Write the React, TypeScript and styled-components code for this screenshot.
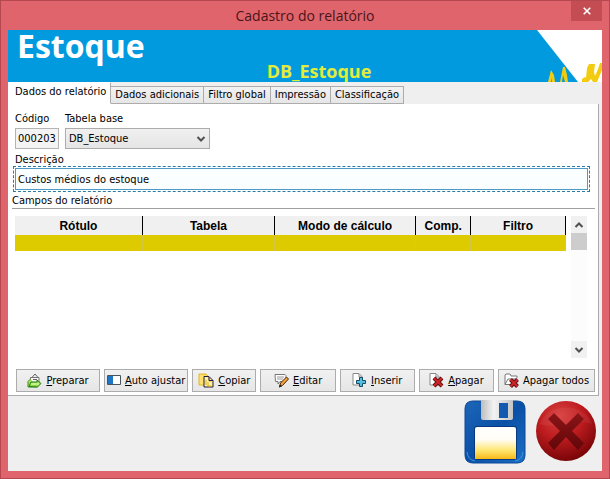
import React, { useState } from "react";
import styled, { createGlobalStyle, css } from "styled-components";

const uiFont = `"DejaVu Sans Condensed", "DejaVu Sans", sans-serif`;

const GlobalStyle = createGlobalStyle`
  * { box-sizing: border-box; }
  body { margin: 0; }
  button, input, select { font: inherit; color: inherit; }
`;

const Window = styled.div`
  min-height: 100vh;
  display: flex;
  flex-direction: column;
  padding: 0 7px 7px;
  border: 1px solid #b5474f;
  background: #e0646c;
  color: #000;
  font-family: ${uiFont};
  font-size: 11px;
  line-height: 14px;
`;

const TitleBar = styled.header`
  display: grid;
  grid-template-columns: 31px 1fr 31px;
  height: 29px;
`;

const Title = styled.h1`
  grid-column: 2;
  margin: 0;
  text-align: center;
  font: 400 14px/30px "Open Sans", sans-serif;
  color: #4a1519;
`;

const CloseButton = styled.button`
  display: grid;
  place-items: center;
  height: 20px;
  padding: 0;
  border: 0;
  background: #c44d53;
`;

const Client = styled.main`
  flex: 1;
  display: flex;
  flex-direction: column;
  background: #efefef;
`;

const Banner = styled.div`
  display: grid;
  grid-template-columns: 1fr 65px;
  height: 52px;
  background: #029adf;
`;

const BannerText = styled.div`
  display: grid;
  grid-template-rows: 31px 21px;
  padding-left: 9px;
`;

const Module = styled.div`
  color: #fff;
  font: 700 32px/32px "Open Sans", sans-serif;
`;

const TableName = styled.div`
  padding-left: 84px;
  text-align: center;
  color: #e2ec3a;
  font: 700 18px/20px "Open Sans", sans-serif;
`;

const TabList = styled.div`
  display: flex;
  align-items: flex-end;
  height: 22px;
`;

const Tab = styled.button<{ $active: boolean }>`
  height: 18px;
  padding: 0 4px;
  border: 1px solid #acacac;
  border-left-width: 0;
  background: linear-gradient(#f2f2f2, #e6e6e6);
  white-space: nowrap;
  ${(p) =>
    p.$active &&
    css`
      height: 22px;
      padding: 0 4px 3px 7px;
      border-color: #fff #acacac #fff #fff;
      background: #fff;
    `}
`;

const Panel = styled.section`
  flex: 1;
  display: flex;
  flex-direction: column;
  margin-right: 3px;
  padding: 8px 3px 3px 4px;
  border: solid #acacac;
  border-width: 0 1px 1px 0;
  background: #fff;
`;

const Fields = styled.div`
  display: flex;
  gap: 6px;
  padding: 0 3px;
`;

const Field = styled.div`
  display: flex;
  flex-direction: column;
  gap: 2px;
`;

const DescriptionField = styled(Field)`
  gap: 1px;
  padding: 4px 7px 0 3px;
`;

const CodeInput = styled.input`
  width: 44px;
  height: 21px;
  padding: 0 2px;
  border: 1px solid #b4b4b4;
  background: #f4f4f4;
`;

const SelectBox = styled.div`
  display: grid;
  align-items: center;
  width: 145px;

  > * { grid-area: 1 / 1; }
  > svg { justify-self: end; margin-right: 4px; pointer-events: none; }
`;

const Select = styled.select`
  appearance: none;
  width: 100%;
  height: 21px;
  padding: 0 20px 0 3px;
  border: 1px solid #acacac;
  border-radius: 0;
  background: linear-gradient(#f0f0f0, #e5e5e5);
`;

const DescriptionInput = styled.input`
  height: 22px;
  padding: 0 2px;
  border: 1px solid #4f9ac4;
  outline: 1px dashed #2a7ba6;
  outline-offset: 1px;
  background: #fafeff;
`;

const GroupTitle = styled.h2`
  margin: 4px 0 7px;
  border-bottom: 1px solid #a0a0a0;
  font: inherit;
`;

const GridArea = styled.div`
  flex: 1;
  display: flex;
  gap: 5px;
  padding: 0 8px 0 3px;
`;

const TableSpace = styled.div`
  flex: 1;
`;

const Table = styled.table`
  width: 100%;
  table-layout: fixed;
  border-collapse: separate;
  border-spacing: 0;
`;

const HeadCell = styled.th`
  height: 19px;
  padding: 0;
  border-right: 1px solid #000;
  background: #f0f0f0;
  font: 700 12px/18px "Liberation Sans", Arial, sans-serif;
`;

const Cell = styled.td`
  height: 16px;
  padding: 0;
  border-right: 1px solid #d2c548;
  background: #ddcb00;
`;

const ScrollBar = styled.div`
  display: flex;
  flex-direction: column;
  width: 16px;
  background: #fcfcfc;
`;

const ScrollButton = styled.button`
  display: grid;
  place-items: center;
  height: 17px;
  padding: 0;
  border: 0;
  background: #f1f1f1;
`;

const ScrollThumb = styled.div`
  height: 17px;
  margin-bottom: auto;
  background: #cdcdcd;
`;

const Toolbar = styled.div`
  display: grid;
  grid-template-columns: 85fr 85fr 65fr 76fr 76fr 76fr 98fr;
  gap: 4px;
  margin-top: 11px;
  padding-left: 4px;
`;

const ToolButton = styled.button`
  display: flex;
  align-items: center;
  justify-content: center;
  gap: 4px;
  height: 23px;
  padding: 0;
  border: 1px solid #acacac;
  background: linear-gradient(#f1f1f1, #e6e6e6);
  white-space: nowrap;

  svg { flex: none; }
`;

const Footer = styled.footer`
  display: flex;
  justify-content: flex-end;
  gap: 7px;
  height: 75px;
  padding: 4px 4px 0 0;
`;

const ImageButton = styled.button`
  width: 64px;
  height: 66px;
  padding: 0;
  border: 0;
  background: none;
`;

const Chevron = ({ up = false }: { up?: boolean }) => (
  <svg width="10" height="8" viewBox="0 0 10 8" fill="none" stroke="#505050" strokeWidth="2">
    <path d={up ? "M1.5 6 5 2.5 8.5 6" : "M1.5 2 5 5.5 8.5 2"} />
  </svg>
);

const BannerArt = () => (
  <svg width="65" height="52" viewBox="0 0 65 52">
    <path d="M0 0h65v52H41z" fill="#fff" />
    <g fill="#f3cc12">
      <path d="M11 52l3-12 3 5 1 7h-3v-4l-1 4zM23 52l3-15h2l2 8 1 7h-3l-2-7-1 7z" />
      <path d="M45 52v-3l3-2 1 1 1-10 2-4h6l-1 8 1 4 3-7 2-6h2v7l-5 12h-4l-2-3-3 3z" />
    </g>
  </svg>
);

const icons = {
  prepare: (
    <svg width="15" height="15" viewBox="0 0 15 15">
      <path d="M3.500 8V4.500H12V9" fill="#f6f6f6" stroke="#777" />
      <path d="M5 4.500l3-3.500 3 3.500M6 6.500h4" fill="none" stroke="#666" />
      <path d="M3.500 6L1 8.500V14h9.500" fill="#a5e35c" stroke="#3b8a25" />
      <path d="M2 13.500l2-4.500h6V7l4 3.500-3.500 3.500z" fill="#8bdb3c" stroke="#2e7d20" />
      <path d="M4 11h8" stroke="#d8f7a8" strokeWidth="1.500" />
    </svg>
  ),
  fit: (
    <svg width="14" height="11" viewBox="0 0 14 11">
      <path d="M.5.500h13v9H.5z" fill="#fff" stroke="#4b545c" />
      <path d="M1 1h5v8H1z" fill="#1f76c4" />
    </svg>
  ),
  copy: (
    <svg width="16" height="15" viewBox="0 0 16 15">
      <path d="M1 1h7l2 2v9H1z" fill="#ffe06a" stroke="#e3b32d" />
      <path d="M6 3.500h5l4 4V14H6z" fill="#fff2a0" stroke="#1c1c40" />
      <path d="M11 4v4h4M8 7v5M10 9v4h3" fill="none" stroke="#e6ae1a" />
      <path d="M11 4v3.500h4" fill="none" stroke="#1c1c60" />
    </svg>
  ),
  edit: (
    <svg width="15" height="15" viewBox="0 0 15 15">
      <path d="M1 1.500h10l1 1v5l-1 1H6L4 11V8.500H1.500z" fill="#fff" stroke="#777" />
      <path d="M3 4h7M3 6h6" stroke="#999" />
      <path d="M5.500 14l1-4 6-6 2 2-6 6.500z" fill="#f4a13a" stroke="#4a2614" />
      <path d="M5 14.500l1-3 2 1.500z" fill="#221" />
    </svg>
  ),
  insert: (
    <svg width="15" height="15" viewBox="0 0 15 15">
      <path d="M1 .5h6l3 3V12H1z" fill="#fff" stroke="#888" />
      <path d="M7 1v3h3" fill="none" stroke="#888" />
      <path d="M7.500 4.500h3v3h3v3h-3v3h-3v-3h-3v-3h3z" fill="#52bfe0" stroke="#174b63" />
    </svg>
  ),
  remove: (
    <svg width="15" height="15" viewBox="0 0 15 15">
      <path d="M1 .5h6l3 3V12H1z" fill="#fff" stroke="#888" />
      <path d="M7 1v3h3" fill="none" stroke="#888" />
      <path d="M5 5l8 8M13 5l-8 8" stroke="#5c1111" strokeWidth="4" />
      <path d="M5 5l8 8M13 5l-8 8" stroke="#cf2429" strokeWidth="2" />
    </svg>
  ),
  removeAll: (
    <svg width="15" height="15" viewBox="0 0 15 15">
      <path d="M1 11.500V2l1-1h4l1 2h6v2M1 11.500L4 6h9v3M1 11.500h7" fill="#fff" stroke="#777" />
      <path d="M6.500 6.500l7 7M13.500 6.500l-7 7" stroke="#5c1111" strokeWidth="4" />
      <path d="M6.500 6.500l7 7M13.500 6.500l-7 7" stroke="#cf2429" strokeWidth="2" />
    </svg>
  ),
};

const SaveIcon = () => (
  <svg width="62" height="64" viewBox="0 0 62 64">
    <defs>
      <linearGradient id="disk" x2="1" y2="1">
        <stop offset="0" stopColor="#1c66b8" />
        <stop offset=".5" stopColor="#0b50a6" />
        <stop offset="1" stopColor="#1b6fc6" />
      </linearGradient>
      <linearGradient id="label" x2="0" y2="1">
        <stop offset="0" stopColor="#fff" />
        <stop offset=".4" stopColor="#fffdf4" />
        <stop offset=".72" stopColor="#ffe774" />
        <stop offset="1" stopColor="#f7b818" />
      </linearGradient>
      <linearGradient id="shutter">
        <stop offset="0" stopColor="#bdbdbd" />
        <stop offset=".4" stopColor="#f3f3f3" />
        <stop offset="1" stopColor="#c4c4c4" />
      </linearGradient>
    </defs>
    <path d="M9 1h44q8 0 8 8v46q0 8-8 8H9q-8 0-8-8V9q0-8 8-8z" fill="url(#disk)" stroke="#0b4796" />
    <path d="M3 52q1 8 8 9M59 52q-1 8-8 9" fill="none" stroke="#3f93d8" />
    <path d="M17 0h32v18q0 2-2 2H19q-2 0-2-2z" fill="url(#shutter)" />
    <path d="M35 3h9v15h-9z" fill="#1459b0" />
    <rect x="10" y="26" width="43" height="34" rx="3" fill="#06397f" />
    <path d="M11 29q0-2 2-2h37q2 0 2 2v30H11z" fill="url(#label)" />
  </svg>
);

const CancelIcon = () => (
  <svg width="62" height="62" viewBox="0 0 62 62">
    <defs>
      <radialGradient id="ball" cx=".4" cy=".25" r=".75">
        <stop offset="0" stopColor="#d84040" />
        <stop offset=".5" stopColor="#bd1c1f" />
        <stop offset="1" stopColor="#7a0508" />
      </radialGradient>
      <linearGradient id="cross" x2="0" y2="1">
        <stop offset="0" stopColor="#8a1518" />
        <stop offset="1" stopColor="#620608" />
      </linearGradient>
    </defs>
    <circle cx="31" cy="31" r="30" fill="url(#ball)" />
    <path d="M5 24C12 2 50 2 57 24 42 18 20 30 5 24z" fill="#f08080" opacity=".12" />
    <path d="M19 13l12 12 12-12 6 6-12 12 12 12-6 7-12-13-12 13-6-7 12-12-12-12z" fill="url(#cross)" />
  </svg>
);

const tabs = ["Dados do relatório", "Dados adicionais", "Filtro global", "Impressão", "Classificação"];

const columns = [
  { name: "Rótulo", share: "23.2%" },
  { name: "Tabela", share: "24%" },
  { name: "Modo de cálculo", share: "25.6%" },
  { name: "Comp.", share: "10%" },
  { name: "Filtro", share: "17.2%" },
];

const actions: { icon: keyof typeof icons; before?: string; mnemonic: string; after: string }[] = [
  { icon: "prepare", mnemonic: "P", after: "reparar" },
  { icon: "fit", mnemonic: "A", after: "uto ajustar" },
  { icon: "copy", mnemonic: "C", after: "opiar" },
  { icon: "edit", mnemonic: "E", after: "ditar" },
  { icon: "insert", mnemonic: "I", after: "nserir" },
  { icon: "remove", mnemonic: "A", after: "pagar" },
  { icon: "removeAll", before: "Apa", mnemonic: "g", after: "ar todos" },
];

export default function App() {
  const [active, setActive] = useState(0);
  return (
    <Window>
      <GlobalStyle />
      <TitleBar>
        <Title>Cadastro do relatório</Title>
        <CloseButton aria-label="Fechar">
          <svg width="8" height="8" viewBox="0 0 8 8" stroke="#fff" strokeWidth="1.600">
            <path d="M.7.700l6.600 6.600M7.300.700L.7 7.300" />
          </svg>
        </CloseButton>
      </TitleBar>
      <Client>
        <Banner>
          <BannerText>
            <Module>Estoque</Module>
            <TableName>DB_Estoque</TableName>
          </BannerText>
          <BannerArt />
        </Banner>
        <TabList role="tablist">
          {tabs.map((name, i) => (
            <Tab key={name} role="tab" aria-selected={i === active} $active={i === active} onClick={() => setActive(i)}>
              {name}
            </Tab>
          ))}
        </TabList>
        <Panel role="tabpanel">
          <Fields>
            <Field>
              <label htmlFor="code">Código</label>
              <CodeInput id="code" defaultValue="000203" readOnly />
            </Field>
            <Field>
              <label htmlFor="base">Tabela base</label>
              <SelectBox>
                <Select id="base">
                  <option>DB_Estoque</option>
                </Select>
                <Chevron />
              </SelectBox>
            </Field>
          </Fields>
          <DescriptionField>
            <label htmlFor="description">Descrição</label>
            <DescriptionInput id="description" defaultValue="Custos médios do estoque" />
          </DescriptionField>
          <GroupTitle>Campos do relatório</GroupTitle>
          <GridArea>
            <TableSpace>
              <Table>
                <colgroup>
                  {columns.map((c) => (
                    <col key={c.name} width={c.share} />
                  ))}
                </colgroup>
                <thead>
                  <tr>
                    {columns.map((c) => (
                      <HeadCell key={c.name}>{c.name}</HeadCell>
                    ))}
                  </tr>
                </thead>
                <tbody>
                  <tr>
                    {columns.map((c) => (
                      <Cell key={c.name} />
                    ))}
                  </tr>
                </tbody>
              </Table>
            </TableSpace>
            <ScrollBar>
              <ScrollButton aria-label="Rolar para cima">
                <Chevron up />
              </ScrollButton>
              <ScrollThumb />
              <ScrollButton aria-label="Rolar para baixo">
                <Chevron />
              </ScrollButton>
            </ScrollBar>
          </GridArea>
          <Toolbar>
            {actions.map((a) => (
              <ToolButton key={a.icon}>
                {icons[a.icon]}
                <span>
                  {a.before}
                  <u>{a.mnemonic}</u>
                  {a.after}
                </span>
              </ToolButton>
            ))}
          </Toolbar>
        </Panel>
        <Footer>
          <ImageButton aria-label="Salvar">
            <SaveIcon />
          </ImageButton>
          <ImageButton aria-label="Cancelar">
            <CancelIcon />
          </ImageButton>
        </Footer>
      </Client>
    </Window>
  );
}
